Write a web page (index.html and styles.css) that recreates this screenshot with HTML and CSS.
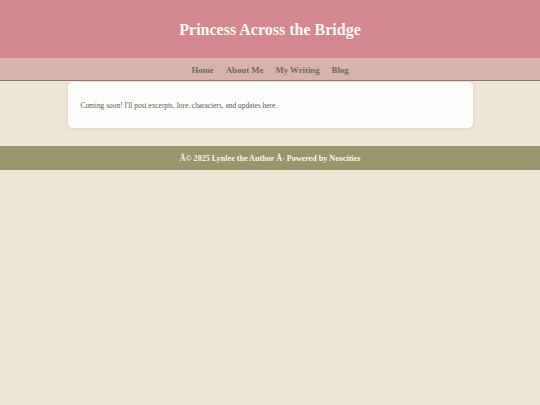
FILE: index.html
```html
<!DOCTYPE html>
<html>
<head>
<meta charset="utf-8">
<link rel="stylesheet" href="styles.css">
</head>
<body>
<header class="site-header">
  <h1 class="site-title">Princess Across the Bridge</h1>
</header>
<nav class="site-nav">
  <a href="#">Home</a>
  <a href="#">About Me</a>
  <a href="#">My Writing</a>
  <a href="#">Blog</a>
</nav>
<main class="content">
  <section class="card">
    <p>Coming soon! I'll post excerpts, lore, characters, and updates here.</p>
  </section>
</main>
<footer class="site-footer">
  <p>Â© 2025 Lynlee the Author Â· Powered by Neocities</p>
</footer>
</body>
</html>
```
FILE: styles.css
```css
html, body {
  margin: 0;
  padding: 0;
}
body {
  background: #f0e6d6;
  font-family: "Liberation Serif", "DejaVu Serif", serif;
  color: #5a5050;
}
.site-header {
  background: #d4878f;
  height: 58px;
  padding-top: 1px;
  box-sizing: border-box;
  display: flex;
  align-items: center;
  justify-content: center;
}
.site-title {
  margin: 0;
  color: #fffaf5;
  font-size: 16px;
  font-weight: bold;
}
.site-nav {
  background: #d8b2b1;
  height: 23px;
  padding-top: 2px;
  box-sizing: border-box;
  border-bottom: 1px solid #8c7b79;
  display: flex;
  align-items: center;
  justify-content: center;
  gap: 12px;
}
.site-nav a {
  color: #6b6e5a;
  text-decoration: none;
  font-weight: bold;
  font-size: 8.75px;
}
.content {
  padding: 1px 0 18px;
}
.card {
  width: 75%;
  margin: 0 auto;
  background: #fffdfb;
  border-radius: 5px;
  box-shadow: 0 1px 4px rgba(120, 100, 80, 0.12);
  height: 46px;
  padding: 0 13px;
  box-sizing: border-box;
  display: flex;
  align-items: center;
}
.card p {
  margin: 0;
  font-size: 7.4px;
  color: #5e5656;
}
.site-footer {
  background: #98966a;
  height: 24px;
  display: flex;
  align-items: center;
  justify-content: center;
}
.site-footer p {
  margin: 0;
  color: #fbf6ea;
  font-weight: bold;
  font-size: 8.1px;
}
```
